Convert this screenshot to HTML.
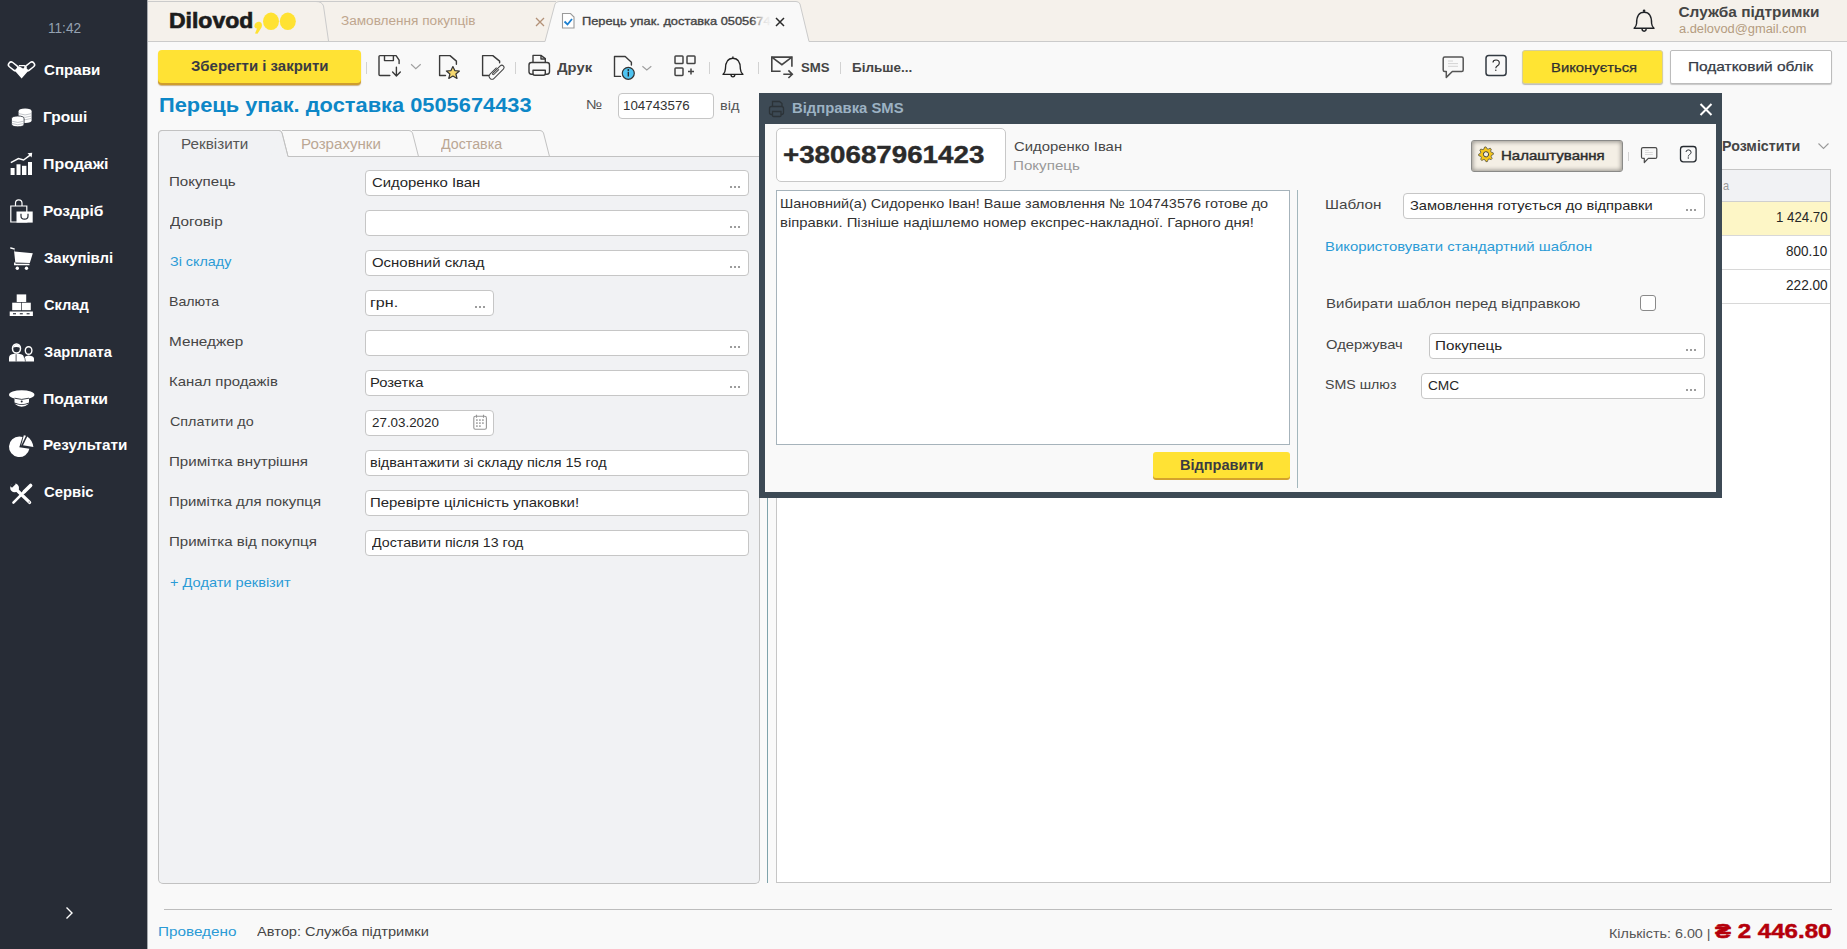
<!DOCTYPE html>
<html><head><meta charset="utf-8"><title>Dilovod</title>
<style>
html,body{margin:0;padding:0}
body{width:1847px;height:949px;overflow:hidden;position:relative;background:#f9f9f9;font-family:"Liberation Sans",sans-serif}
.a{position:absolute;box-sizing:border-box}
.t{position:absolute;white-space:pre;transform-origin:0 0;font-family:"Liberation Sans",sans-serif}
.inp{position:absolute;box-sizing:border-box;background:#fff;border:1px solid #c6c6c6;border-radius:4px}
.sep{position:absolute;width:1px;background:#d2d2d2}
svg{position:absolute;overflow:visible}
</style></head><body>
<!-- SIDEBAR -->
<div class="a" style="left:0;top:0;width:147px;height:949px;background:#272c36"></div>
<div class="a" style="left:147px;top:0;width:1px;height:949px;background:#a7aaae"></div>
<svg style="left:0;top:0" width="1" height="1">
<g fill="#fff" stroke="none">
<!-- handshake -->
<g transform="translate(13.2 66.3) rotate(38)"><rect x="-5.2" y="-2.7" width="10.4" height="5.4" rx="2.5" fill="none" stroke="#fff" stroke-width="1.5"/></g>
<g transform="translate(29.8 66.3) rotate(-38)"><rect x="-5.2" y="-2.7" width="10.4" height="5.4" rx="2.5" fill="none" stroke="#fff" stroke-width="1.5"/></g>
<path d="M14.6 70.6 L21.6 78.6 L28.6 70.6 L25.8 67.2 L23 68.6 L19.6 66.4 H18.2 Z"/>
<path d="M18.8 65.6 H24.4 L26.6 67.8" fill="none" stroke="#fff" stroke-width="1.3"/>
<!-- coins -->
<path d="M18.6 111.3 Q18.6 108.5 25.1 108.5 Q31.6 108.5 31.6 111.3 V120.3 Q31.6 123 25.1 123 Q18.6 123 18.6 120.3 Z"/>
<path d="M18.7 113.6 Q25.1 116.3 31.5 113.6 M18.7 116 Q25.1 118.7 31.5 116 M18.7 118.4 Q25.1 121.1 31.5 118.4" fill="none" stroke="#9aa0a8" stroke-width="0.6"/>
<path d="M11.5 118.8 Q11.5 116 17.8 116 Q24.1 116 24.1 118.8 V124 Q24.1 126.8 17.8 126.8 Q11.5 126.8 11.5 124 Z" stroke="#272c36" stroke-width="0.8"/>
<path d="M11.6 121.1 Q17.8 123.8 24 121.1 M11.6 123.4 Q17.8 126.1 24 123.4" fill="none" stroke="#9aa0a8" stroke-width="0.6"/>
<!-- chart -->
<rect x="10.6" y="168" width="4" height="7"/>
<rect x="16.5" y="164.3" width="4" height="10.7"/>
<rect x="22" y="165.8" width="4.4" height="9.2"/>
<rect x="28" y="162" width="4" height="13"/>
<path d="M10.8 162.6 L18.4 158.5 L23.6 160 L30.5 154.8" fill="none" stroke="#fff" stroke-width="1.5"/>
<path d="M27.5 153.2 L32.2 152.8 L31.6 157.5 Z"/>
<!-- bag -->
<path d="M10.8 206 H26.8 V222 H10.8 Z" fill="none" stroke="#fff" stroke-width="1.2"/>
<path d="M15.5 206 V203 Q15.5 199.8 18.7 199.8 Q22 199.8 22 203 V206" fill="none" stroke="#fff" stroke-width="1.2"/>
<rect x="16.5" y="211.5" width="16.2" height="11.1"/>
<path d="M21 213.8 V216 Q21 219.2 24.5 219.2 Q28 219.2 28 216 V213.8" fill="none" stroke="#272c36" stroke-width="1.2"/>
<!-- cart -->
<path d="M10.8 248 L14.1 248.9" fill="none" stroke="#fff" stroke-width="1.5" stroke-linecap="round"/>
<path d="M13.8 248.6 L14.5 251.4 L32.8 253.3 L29.8 262.9 L15.3 262.5 Z"/>
<path d="M14.8 262.5 V264.6 H29.5" fill="none" stroke="#fff" stroke-width="1.5"/>
<circle cx="17.3" cy="268.2" r="1.7"/><circle cx="26.5" cy="268.2" r="1.7"/>
<!-- sklad -->
<rect x="16.7" y="294.4" width="9.5" height="7.6"/>
<rect x="12.2" y="302.7" width="8.8" height="7.5"/>
<rect x="21.7" y="302.7" width="9.1" height="7.5"/>
<rect x="9.7" y="311.5" width="23.2" height="4.5"/>
<rect x="13" y="313.2" width="3" height="1.1" fill="#272c36"/>
<rect x="19.8" y="313.2" width="3" height="1.1" fill="#272c36"/>
<rect x="26.6" y="313.2" width="3" height="1.1" fill="#272c36"/>
<!-- people -->
<path d="M9 361.5 V358 Q9 354.5 13 354 L16.5 353.5 L20 354 Q24 354.5 24 358 V361.5 Z"/>
<path d="M16.1 354.2 V361.5" stroke="#272c36" stroke-width="0.8"/>
<ellipse cx="16.5" cy="348.5" rx="4" ry="4.6" fill="none" stroke="#fff" stroke-width="1.5"/>
<path d="M12.8 347.5 Q14 344.5 16.5 344.5 Q19.5 344.5 20.2 347.8 Q17 346.5 12.8 347.5 Z"/>
<path d="M23.8 361.5 V358.8 Q23.8 356.4 26.5 356 L28.6 355.6 L30.8 356 Q34 356.4 34 358.8 V361.5 Z"/>
<path d="M24.2 356.8 Q25 358 25.5 361.5" stroke="#272c36" stroke-width="0.7" fill="none"/>
<ellipse cx="28.6" cy="350.5" rx="3.3" ry="3.8" fill="none" stroke="#fff" stroke-width="1.4"/>
<!-- cap -->
<ellipse cx="21.7" cy="394.8" rx="12.7" ry="4.6"/>
<path d="M14.5 398 H29 V402.5 Q21.7 406 14.5 402.5 Z"/>
<path d="M14.3 403.5 Q21.7 410 29.2 403.5 Q21.7 406.3 14.3 403.5 Z"/>
<path d="M14.5 398.2 Q21.7 400.6 29 398.2" fill="none" stroke="#272c36" stroke-width="0.9"/>
<circle cx="21.7" cy="401.5" r="1" fill="#272c36"/>
<!-- pie -->
<path d="M19.3 447.3 L22.5 437 Q20.9 436.5 19.3 436.5 A 10.3 10.3 0 1 0 29.4 448.8 Z"/>
<path d="M23.8 435.2 L26 435.7 L21 446 Z"/>
<path d="M27.3 436.5 Q32.4 440 33.4 447 L23 445.2 Z"/>
<!-- tools -->
<path d="M13.4 502.6 L24.5 491.5" stroke="#fff" stroke-width="2.5" fill="none" stroke-linecap="round"/>
<path d="M24.2 491.8 L30.6 485.4" stroke="#fff" stroke-width="3.6" fill="none" stroke-linecap="round"/>
<path d="M16.5 489.8 L29.6 502.4" stroke="#fff" stroke-width="3.3" fill="none" stroke-linecap="round"/>
<circle cx="14.6" cy="487.9" r="4.4"/>
<g transform="translate(12.3 485.6) rotate(45)"><rect x="-1.4" y="-3.6" width="2.8" height="5.4" fill="#272c36"/></g>
<circle cx="29.2" cy="502" r="0.6" fill="#272c36"/>
</g>
</svg>


<!-- HEADER -->
<svg style="left:148px;top:0" width="1699" height="42">
<rect x="0" y="0" width="1699" height="42" fill="#f5f1eb"/>
<path d="M397 42 L407 4 Q408 1.5 411 1.5 H648 Q651 1.5 652 4 L661 42 Z" fill="#f9f9f9"/>
<path d="M0 1.5 H168 Q174 1.5 175.5 6 L180.6 41.5" stroke="#cbcbcb" stroke-width="1" fill="none"/>
<path d="M168 1.5 H408" stroke="#cbcbcb" stroke-width="1" fill="none"/>
<path d="M397 41.5 L407 4 Q408 1.5 411 1.5 H648 Q651 1.5 652 4 L661 41.5" stroke="#cbcbcb" stroke-width="1" fill="none"/>
<path d="M0 41.5 H397 M661 41.5 H1699" stroke="#cbcbcb" stroke-width="1" fill="none"/>
</svg>
<!-- logo dots -->
<svg style="left:0;top:0" width="1" height="1">
<path d="M256.5 22.5 Q254 24 254.5 27 Q255.5 28.5 257 28.5 L255 33.5 L257.5 33.7 L261.5 27.5 Q263 23 259.5 21.8 Q257.5 21.5 256.5 22.5 Z" fill="#ffe232"/>
<ellipse cx="271" cy="21.3" rx="8" ry="8.7" fill="#ffe232"/>
<ellipse cx="287.8" cy="21.3" rx="8" ry="8.7" fill="#ffe232"/>
</svg>
<!-- tab2 close -->
<svg style="left:0;top:0" width="1" height="1">
<path d="M536 18 L544 26 M544 18 L536 26" stroke="#b39177" stroke-width="1.3"/>
<path d="M776 18 L784 26 M784 18 L776 26" stroke="#2a2a2a" stroke-width="1.5"/>
<path d="M562.5 13.5 H570.5 L574 17 V28 H562.5 Z" fill="#fff" stroke="#9a9a9a" stroke-width="1.1"/>
<path d="M564.5 21.5 L567.5 24.5 L572 19" stroke="#1b7fd0" stroke-width="1.8" fill="none"/>
</svg>
<!--TAB3FADE-->
<!-- header bell -->
<svg style="left:0;top:0" width="1" height="1">
<path d="M1636.6 23.5 Q1636.4 12.3 1644.1 12.3 Q1651.8 12.3 1651.6 23.5 Q1651.9 26.5 1654 28.3 H1634.1 Q1636.3 26.5 1636.6 23.5 Z M1642 28.6 Q1642 31.2 1644.1 31.2 Q1646.2 31.2 1646.2 28.6" stroke="#1f2226" stroke-width="1.4" fill="none" stroke-linejoin="round"/><circle cx="1644.1" cy="10.8" r="1.3" fill="#1f2226"/>
</svg>

<!-- TOOLBAR -->
<div class="a" style="left:158px;top:50px;width:203px;height:33px;background:#ffe234;border-radius:4px;box-shadow:0 2px 0 #cf9d2d,0 2.5px 1px rgba(160,110,30,0.5)"></div>
<div class="sep" style="left:366px;top:62px;height:12px"></div>
<div class="sep" style="left:515px;top:62px;height:12px"></div>
<div class="sep" style="left:709px;top:62px;height:12px"></div>
<div class="sep" style="left:758px;top:62px;height:12px"></div>
<div class="sep" style="left:840px;top:62px;height:12px"></div>
<svg style="left:0;top:0" width="1" height="1">
<g fill="none" stroke="#3a3a3a" stroke-width="1.4" stroke-linejoin="round" stroke-linecap="round">
<!-- save -->
<path d="M389.8 75.5 H380 Q379 75.5 379 74.5 V56.6 Q379 55.6 380 55.6 H396.1 L399.1 60.1 V63.5"/>
<path d="M384.5 55.8 V60.6 H393.4 V55.8"/>
<path d="M396.4 67.2 V75.8 M392.6 72.1 L396.4 75.9 L400.3 72.1"/>
<!-- doc star -->
<path d="M445.5 75.5 H439.6 V55.6 H450 L456.4 61.1 V64.2"/>
<!-- doc clip -->
<path d="M488.5 75.5 H482.6 V55.6 H492.8 L499.6 61.1 V62.8"/>
<!-- printer -->
<path d="M533 62.3 V55.4 H540.9 L545.3 58.6 V62.3"/>
<path d="M541 55.6 V59 H545"/>
<path d="M533 74.2 H531.4 Q529 74.2 529 71.8 V65 Q529 62.5 531.4 62.5 H547 Q549.5 62.5 549.5 65 V71.8 Q549.5 74.2 547 74.2 H545.3"/>
<path d="M533 70.2 H545.3 V73.5 Q545.3 75.3 543.5 75.3 H534.8 Q533 75.3 533 73.5 Z"/>
<!-- doc info -->
<path d="M620.5 76.4 H614.5 V56.5 H625.2 L631.4 62.2 V65"/>
</g>
<path d="M452.9 66.5 L454.8 70.6 L459.4 71 L455.9 74 L457 78.4 L452.9 76 L448.8 78.4 L449.9 74 L446.4 71 L451 70.6 Z" fill="#f6d86f" stroke="#333" stroke-width="1.2" stroke-linejoin="round"/>
<g transform="translate(496.5 71.8) rotate(-45)">
<path d="M3 -2.9 H-6.3 A2.9 2.9 0 0 0 -6.3 2.9 H6.8 A2.2 2.2 0 0 0 6.8 -1.5 H-3.8 A0.75 0.75 0 0 0 -3.8 0 H3.5" fill="none" stroke="#444" stroke-width="1"/>
</g>
<path d="M411.1 64.3 L415.8 68.6 L420.7 64.3 M642.4 66.2 L646.8 69.9 L651.3 66.2" fill="none" stroke="#a0a0a0" stroke-width="1.2"/>
<circle cx="628.3" cy="73.3" r="6" fill="#4fc4f1" stroke="#333" stroke-width="1.2"/>
<circle cx="628.3" cy="70" r="0.9" fill="#222"/>
<path d="M628.3 71.8 V76.6" stroke="#222" stroke-width="1.3"/>
<g fill="none" stroke="#444" stroke-width="1.5">
<rect x="675" y="56" width="8" height="7.5" rx="0.8"/>
<rect x="687" y="56" width="8" height="7.5" rx="0.8"/>
<rect x="675" y="68" width="8" height="7.4" rx="0.8"/>
<path d="M691 68.5 V74.5 M688 71.5 H694"/>
</g>
<path d="M732.9 56.6 V58 M725.4 69 Q725.4 58.2 732.9 58.2 Q740.4 58.2 740.4 69 Q740.6 72.6 742.9 74.4 H723.1 Q725.2 72.6 725.4 69 Z M731 74.6 Q731 76.9 732.9 76.9 Q734.8 76.9 734.8 74.6" fill="none" stroke="#222" stroke-width="1.4" stroke-linejoin="round"/>
<g fill="none" stroke="#444" stroke-width="1.6">
<path d="M780.6 71.3 H771.8 V57.1 H791.9 V66.7"/>
<path d="M771.8 57.1 L781.9 64.7 L791.9 57.1"/>
<path d="M783.3 74.2 H792.2 M788.4 70.4 L792.3 74.2 L788.4 78"/>
</g>
<path d="M1444.7 57 H1461.7 Q1463.2 57 1463.2 58.5 V70 Q1463.2 71.5 1461.7 71.5 H1452.3 L1446.3 77.4 V71.5 H1444.7 Q1443.2 71.5 1443.2 70 V58.5 Q1443.2 57 1444.7 57 Z" fill="none" stroke="#555" stroke-width="1.5" stroke-linejoin="round"/>
<path d="M1448 61 H1453 M1448 63.6 H1458 M1448 66.3 H1458" stroke="#cfcfcf" stroke-width="0.9"/>
<rect x="1486" y="55.5" width="20.1" height="20" rx="2.8" fill="none" stroke="#333a42" stroke-width="1.5"/>
<path d="M1493 62.5 Q1493 60 1496 60 Q1499.3 60 1499.3 63 Q1499.3 65 1497.2 66 Q1495.8 66.8 1495.8 68.3" fill="none" stroke="#222" stroke-width="1.1"/>
<circle cx="1495.8" cy="70.3" r="0.7" fill="#222"/>
</svg>

<div class="a" style="left:1522px;top:50px;width:141px;height:34px;background:#ffe433;border:1px solid #d6cf9c;border-radius:3px;box-shadow:0 1px 1px rgba(0,0,0,0.25)"></div>
<div class="a" style="left:1670px;top:50px;width:162px;height:34px;background:#fff;border:1px solid #bcbcbc;border-radius:2px;box-shadow:0 1px 1px rgba(0,0,0,0.2)"></div>

<!-- TITLE ROW -->
<div class="inp" style="left:618px;top:93px;width:96px;height:26px"></div>

<!-- FORM PANEL -->
<div class="a" style="left:158px;top:156px;width:602px;height:728px;background:#f1f2f4;border:1px solid #c2c2c2;border-top:none;border-radius:0 0 5px 5px"></div>
<svg style="left:0;top:0" width="1" height="1">
<path d="M158.5 157 V134 Q158.5 130.5 162 130.5 H279 Q281 130.5 282 133 L288 156.5 H760" fill="none" stroke="#c2c2c2" stroke-width="1"/>
<path d="M282 130.5 H409 Q411.5 130.5 412.5 133 L418.5 156.5 M412 130.5 H540 Q542.5 130.5 543.5 133 L549.5 156.5" fill="none" stroke="#c2c2c2" stroke-width="1"/>
</svg>
<div class="a" style="left:159px;top:131px;width:122px;height:26px;background:#f1f2f4"></div>
<svg style="left:0;top:0" width="1" height="1">
<path d="M281 131 L287.5 157 H270 Z" fill="#f1f2f4"/>
<path d="M158.5 157 V134 Q158.5 130.5 162 130.5 H279 Q281 130.5 282 133 L288 156.5" fill="none" stroke="#c2c2c2" stroke-width="1"/>
</svg>
<div class="inp" style="left:365px;top:170px;width:384px;height:26px"></div>
<div class="a" style="left:730px;top:186px;width:2px;height:2px;background:#9c9c9c"></div>
<div class="a" style="left:734px;top:186px;width:2px;height:2px;background:#9c9c9c"></div>
<div class="a" style="left:738px;top:186px;width:2px;height:2px;background:#9c9c9c"></div>
<div class="inp" style="left:365px;top:210px;width:384px;height:26px"></div>
<div class="a" style="left:730px;top:226px;width:2px;height:2px;background:#9c9c9c"></div>
<div class="a" style="left:734px;top:226px;width:2px;height:2px;background:#9c9c9c"></div>
<div class="a" style="left:738px;top:226px;width:2px;height:2px;background:#9c9c9c"></div>
<div class="inp" style="left:365px;top:250px;width:384px;height:26px"></div>
<div class="a" style="left:730px;top:266px;width:2px;height:2px;background:#9c9c9c"></div>
<div class="a" style="left:734px;top:266px;width:2px;height:2px;background:#9c9c9c"></div>
<div class="a" style="left:738px;top:266px;width:2px;height:2px;background:#9c9c9c"></div>
<div class="inp" style="left:365px;top:290px;width:129px;height:26px"></div>
<div class="a" style="left:475px;top:306px;width:2px;height:2px;background:#9c9c9c"></div>
<div class="a" style="left:479px;top:306px;width:2px;height:2px;background:#9c9c9c"></div>
<div class="a" style="left:483px;top:306px;width:2px;height:2px;background:#9c9c9c"></div>
<div class="inp" style="left:365px;top:330px;width:384px;height:26px"></div>
<div class="a" style="left:730px;top:346px;width:2px;height:2px;background:#9c9c9c"></div>
<div class="a" style="left:734px;top:346px;width:2px;height:2px;background:#9c9c9c"></div>
<div class="a" style="left:738px;top:346px;width:2px;height:2px;background:#9c9c9c"></div>
<div class="inp" style="left:365px;top:370px;width:384px;height:26px"></div>
<div class="a" style="left:730px;top:386px;width:2px;height:2px;background:#9c9c9c"></div>
<div class="a" style="left:734px;top:386px;width:2px;height:2px;background:#9c9c9c"></div>
<div class="a" style="left:738px;top:386px;width:2px;height:2px;background:#9c9c9c"></div>
<div class="inp" style="left:365px;top:410px;width:129px;height:26px"></div>
<div class="inp" style="left:365px;top:450px;width:384px;height:26px"></div>
<div class="inp" style="left:365px;top:490px;width:384px;height:26px"></div>
<div class="inp" style="left:365px;top:530px;width:384px;height:26px"></div>
<svg style="left:0;top:0" width="1" height="1">
<rect x="473.8" y="416.3" width="12.6" height="13" rx="1.6" fill="none" stroke="#959595" stroke-width="1.1"/>
<path d="M476.5 414.8 V417.8 M483.5 414.8 V417.8" stroke="#959595" stroke-width="1.1"/>
<g fill="#b0b0b0"><rect x="476" y="419.2" width="1.8" height="1.8"/><rect x="479" y="419.2" width="1.8" height="1.8"/><rect x="482" y="419.2" width="1.8" height="1.8"/>
<rect x="476" y="422.2" width="1.8" height="1.8"/><rect x="479" y="422.2" width="1.8" height="1.8"/><rect x="482" y="422.2" width="1.8" height="1.8"/>
<rect x="476" y="425.2" width="1.8" height="1.8"/><rect x="479" y="425.2" width="1.8" height="1.8"/></g>
</svg>

<!-- RIGHT AREA -->
<div class="a" style="left:767px;top:130px;width:1px;height:753px;background:#7fa3ab"></div>
<div class="a" style="left:776px;top:169px;width:1055px;height:714px;background:#fff;border:1px solid #c6c6c6"></div>
<div class="a" style="left:777px;top:170px;width:1053px;height:32px;background:#f1f2f4;border-bottom:1px solid #cfcfcf"></div>
<div class="a" style="left:777px;top:202px;width:1053px;height:34px;background:#fdf6c6;border-bottom:1px solid #d8d8d8"></div>
<div class="a" style="left:777px;top:236px;width:1053px;height:34px;background:#fff;border-bottom:1px solid #d8d8d8"></div>
<div class="a" style="left:777px;top:270px;width:1053px;height:34px;background:#fff;border-bottom:1px solid #d8d8d8"></div>
<svg style="left:0;top:0" width="1" height="1">
<path d="M1818.5 143.5 L1823.5 148.5 L1828.5 143.5" stroke="#9a9a9a" stroke-width="1.1" fill="none"/>
</svg>

<!-- FOOTER -->
<div class="a" style="left:164px;top:909px;width:1668px;height:1px;background:#bdbdbd"></div>
<svg style="left:0;top:0" width="1" height="1">
<path d="M66.5 907.5 L72 913 L66.5 918.5" stroke="#ffffff" stroke-width="1.4" fill="none"/>
</svg>

<!-- MODAL -->
<div class="a" style="left:759px;top:93px;width:963px;height:405px;background:#3d4a55"></div>
<div class="a" style="left:765px;top:124px;width:951px;height:368px;background:#f9f9f9"></div>
<svg style="left:0;top:0" width="1" height="1">
<g stroke="#2c3338" stroke-width="1.3" fill="none">
<path d="M772.5 106.5 V101.5 H779.5 L782 103.5 V106.5"/>
<path d="M772.5 114.5 H771.5 Q769.5 114.5 769.5 112.5 V108.5 Q769.5 106.5 771.5 106.5 H781.5 Q783.5 106.5 783.5 108.5 V112.5 Q783.5 114.5 781.5 114.5 H781"/>
<path d="M772.5 111.5 H781 V115.5 Q781 116.5 780 116.5 H773.5 Q772.5 116.5 772.5 115.5 Z"/>
</g>
<path d="M1700.5 104 L1711.5 115 M1711.5 104 L1700.5 115" stroke="#ffffff" stroke-width="2"/>
</svg>
<div class="a" style="left:776px;top:128px;width:230px;height:54px;background:#fff;border:1px solid #c8c8c8;border-radius:5px"></div>
<div class="a" style="left:776px;top:190px;width:514px;height:255px;background:#fff;border:1px solid #a6b3bb"></div>
<div class="a" style="left:1297px;top:190px;width:1px;height:298px;background:#a3b7bd"></div>
<div class="a" style="left:1153px;top:452px;width:137px;height:26px;background:#ffe234;border-radius:3px;box-shadow:0 2px 0 #d4a22c"></div>
<div class="a" style="left:1471px;top:140px;width:152px;height:32px;background:#f4efe5;border:1px solid #8a8a88;border-radius:3px;box-shadow:inset 0 0 4px 1px rgba(0,0,0,0.38)"></div>
<svg style="left:0;top:0" width="1" height="1">
<g transform="translate(1486,154.3) rotate(-11)"><path d="M0.00 -7.40 L1.44 -7.26 L2.14 -5.17 L3.11 -4.66 L5.23 -5.23 L6.15 -4.11 L5.17 -2.14 L5.49 -1.09 L7.40 0.00 L7.26 1.44 L5.17 2.14 L4.66 3.11 L5.23 5.23 L4.11 6.15 L2.14 5.17 L1.09 5.49 L0.00 7.40 L-1.44 7.26 L-2.14 5.17 L-3.11 4.66 L-5.23 5.23 L-6.15 4.11 L-5.17 2.14 L-5.49 1.09 L-7.40 0.00 L-7.26 -1.44 L-5.17 -2.14 L-4.66 -3.11 L-5.23 -5.23 L-4.11 -6.15 L-2.14 -5.17 L-1.09 -5.49 Z" fill="#f5c61c" stroke="#4a4a40" stroke-width="0.7" stroke-linejoin="round"/><circle cx="0" cy="0" r="2.6" fill="#f4efe5" stroke="#3a3a35" stroke-width="0.9"/></g>
</svg>
<div class="sep" style="left:1628px;top:152px;height:9px"></div>
<svg style="left:0;top:0" width="1" height="1">
<path d="M1643 147.6 H1655.3 Q1656.8 147.6 1656.8 149.1 V156.9 Q1656.8 158.4 1655.3 158.4 H1648.3 L1644.3 162.5 V158.4 H1643 Q1641.5 158.4 1641.5 156.9 V149.1 Q1641.5 147.6 1643 147.6 Z" fill="none" stroke="#4a4a4a" stroke-width="1.2" stroke-linejoin="round"/>
<path d="M1645 150.4 H1648.8 M1645 152.5 H1652.8 M1645 154.5 H1652.8" stroke="#cccccc" stroke-width="0.7"/>
<rect x="1680.5" y="146.5" width="15.6" height="15.4" rx="2.8" fill="none" stroke="#262b30" stroke-width="1.3"/>
</svg>
<svg style="left:0;top:0" width="1" height="1"><path d="M1686 152 Q1686 149.9 1688.5 149.9 Q1691.1 149.9 1691.1 152.3 Q1691.1 153.8 1689.5 154.6 Q1688.3 155.3 1688.3 156.5" fill="none" stroke="#2a2f35" stroke-width="1"/><circle cx="1688.3" cy="158" r="0.7" fill="#2a2f35"/></svg>
<div class="inp" style="left:1403px;top:193px;width:302px;height:26px"></div>
<div class="a" style="left:1640px;top:295px;width:16px;height:16px;background:#fff;border:1px solid #8a8a8a;border-radius:3px"></div>
<div class="inp" style="left:1429px;top:333px;width:276px;height:26px"></div>
<div class="inp" style="left:1421px;top:373px;width:284px;height:26px"></div>
<div class="a" style="left:1686px;top:209px;width:2px;height:2px;background:#9c9c9c"></div>
<div class="a" style="left:1690px;top:209px;width:2px;height:2px;background:#9c9c9c"></div>
<div class="a" style="left:1694px;top:209px;width:2px;height:2px;background:#9c9c9c"></div>
<div class="a" style="left:1686px;top:349px;width:2px;height:2px;background:#9c9c9c"></div>
<div class="a" style="left:1690px;top:349px;width:2px;height:2px;background:#9c9c9c"></div>
<div class="a" style="left:1694px;top:349px;width:2px;height:2px;background:#9c9c9c"></div>
<div class="a" style="left:1686px;top:389px;width:2px;height:2px;background:#9c9c9c"></div>
<div class="a" style="left:1690px;top:389px;width:2px;height:2px;background:#9c9c9c"></div>
<div class="a" style="left:1694px;top:389px;width:2px;height:2px;background:#9c9c9c"></div>


<div class="t" style="left:48.11px;top:20px;font-size:15.3px;line-height:15.3px;font-weight:400;color:#95a2b2;transform:scaleX(0.8889);">11:42</div>
<div class="t" style="left:44.30px;top:63px;font-size:14.5px;line-height:14.5px;font-weight:700;color:#ffffff;transform:scaleX(1.0434);">Справи</div>
<div class="t" style="left:43.23px;top:110px;font-size:14.5px;line-height:14.5px;font-weight:700;color:#ffffff;transform:scaleX(1.0675);">Гроші</div>
<div class="t" style="left:43.20px;top:157px;font-size:14.5px;line-height:14.5px;font-weight:700;color:#ffffff;transform:scaleX(1.0983);">Продажі</div>
<div class="t" style="left:43.23px;top:204px;font-size:14.5px;line-height:14.5px;font-weight:700;color:#ffffff;transform:scaleX(1.0727);">Роздріб</div>
<div class="t" style="left:44.30px;top:251px;font-size:14.5px;line-height:14.5px;font-weight:700;color:#ffffff;transform:scaleX(1.0299);">Закупівлі</div>
<div class="t" style="left:44.30px;top:298px;font-size:14.5px;line-height:14.5px;font-weight:700;color:#ffffff;transform:scaleX(1.0067);">Склад</div>
<div class="t" style="left:44.30px;top:345px;font-size:14.5px;line-height:14.5px;font-weight:700;color:#ffffff;transform:scaleX(1.0103);">Зарплата</div>
<div class="t" style="left:43.21px;top:392px;font-size:14.5px;line-height:14.5px;font-weight:700;color:#ffffff;transform:scaleX(1.0914);">Податки</div>
<div class="t" style="left:43.25px;top:438px;font-size:14.5px;line-height:14.5px;font-weight:700;color:#ffffff;transform:scaleX(1.0532);">Результати</div>
<div class="t" style="left:44.30px;top:485px;font-size:14.5px;line-height:14.5px;font-weight:700;color:#ffffff;transform:scaleX(1.0229);">Сервіс</div>
<div class="t" style="left:168.67px;top:10px;font-size:22.4px;line-height:22.4px;font-weight:700;color:#1c1c1c;transform:scaleX(1.0263);-webkit-text-stroke:0.7px #1c1c1c;">Dilovod</div>
<div class="t" style="left:340.80px;top:15px;font-size:12.3px;line-height:12.3px;font-weight:400;color:#bfa68e;transform:scaleX(1.1058);">Замовлення покупців</div>
<div class="t" style="left:1678.50px;top:4px;font-size:15.4px;line-height:15.4px;font-weight:700;color:#454545;">Служба підтримки</div>
<div class="t" style="left:1678.50px;top:23px;font-size:12.5px;line-height:12.5px;font-weight:400;color:#b49c80;transform:scaleX(1.0282);">a.delovod@gmail.com</div>
<div class="t" style="left:191.40px;top:60px;font-size:13.8px;line-height:13.8px;font-weight:700;color:#3a3b42;transform:scaleX(1.0841);">Зберегти і закрити</div>
<div class="t" style="left:556.70px;top:61px;font-size:13.5px;line-height:13.5px;font-weight:700;color:#454545;transform:scaleX(1.0969);">Друк</div>
<div class="t" style="left:800.70px;top:61px;font-size:13.5px;line-height:13.5px;font-weight:700;color:#454545;transform:scaleX(0.9759);">SMS</div>
<div class="t" style="left:852.00px;top:61px;font-size:13.5px;line-height:13.5px;font-weight:700;color:#454545;">Більше...</div>
<div class="t" style="left:1550.90px;top:61px;font-size:13.5px;line-height:13.5px;font-weight:400;color:#303030;transform:scaleX(1.0974);-webkit-text-stroke:0.25px #303030;">Виконується</div>
<div class="t" style="left:1687.86px;top:60px;font-size:13.5px;line-height:13.5px;font-weight:400;color:#353a45;transform:scaleX(1.1440);-webkit-text-stroke:0.25px #353a45;">Податковий облік</div>
<div class="t" style="left:158.95px;top:95px;font-size:20.9px;line-height:20.9px;font-weight:700;color:#0d87c7;transform:scaleX(1.0451);">Перець упак. доставка 0505674433</div>
<div class="t" style="left:585.63px;top:98px;font-size:13px;line-height:13px;font-weight:400;color:#555555;transform:scaleX(1.1692);">№</div>
<div class="t" style="left:622.98px;top:99px;font-size:13px;line-height:13px;font-weight:400;color:#333333;transform:scaleX(1.0250);">104743576</div>
<div class="t" style="left:719.88px;top:99px;font-size:13px;line-height:13px;font-weight:400;color:#555555;transform:scaleX(1.1176);">від</div>
<div class="t" style="left:180.81px;top:137px;font-size:14px;line-height:14px;font-weight:400;color:#555555;transform:scaleX(1.0900);">Реквізити</div>
<div class="t" style="left:300.62px;top:137px;font-size:14px;line-height:14px;font-weight:400;color:#bba794;transform:scaleX(1.0795);">Розрахунки</div>
<div class="t" style="left:441.30px;top:137px;font-size:14px;line-height:14px;font-weight:400;color:#bba794;transform:scaleX(1.0167);">Доставка</div>
<div class="t" style="left:168.83px;top:176px;font-size:12.9px;line-height:12.9px;font-weight:400;color:#454545;transform:scaleX(1.1714);">Покупець</div>
<div class="t" style="left:170.00px;top:216px;font-size:12.9px;line-height:12.9px;font-weight:400;color:#454545;transform:scaleX(1.1841);">Договір</div>
<div class="t" style="left:170.00px;top:256px;font-size:12.9px;line-height:12.9px;font-weight:400;color:#2b9bd6;transform:scaleX(1.1127);">Зі складу</div>
<div class="t" style="left:168.90px;top:296px;font-size:12.9px;line-height:12.9px;font-weight:400;color:#454545;transform:scaleX(1.1000);">Валюта</div>
<div class="t" style="left:168.81px;top:336px;font-size:12.9px;line-height:12.9px;font-weight:400;color:#454545;transform:scaleX(1.1852);">Менеджер</div>
<div class="t" style="left:168.84px;top:376px;font-size:12.9px;line-height:12.9px;font-weight:400;color:#454545;transform:scaleX(1.1559);">Канал продажів</div>
<div class="t" style="left:170.00px;top:416px;font-size:12.9px;line-height:12.9px;font-weight:400;color:#454545;transform:scaleX(1.1120);">Сплатити до</div>
<div class="t" style="left:168.83px;top:456px;font-size:12.9px;line-height:12.9px;font-weight:400;color:#454545;transform:scaleX(1.1709);">Примітка внутрішня</div>
<div class="t" style="left:168.84px;top:496px;font-size:12.9px;line-height:12.9px;font-weight:400;color:#454545;transform:scaleX(1.1577);">Примітка для покупця</div>
<div class="t" style="left:168.83px;top:536px;font-size:12.9px;line-height:12.9px;font-weight:400;color:#454545;transform:scaleX(1.1688);">Примітка від покупця</div>
<div class="t" style="left:170.00px;top:577px;font-size:12.9px;line-height:12.9px;font-weight:400;color:#2b9bd6;transform:scaleX(1.1308);">+ Додати реквізит</div>
<div class="t" style="left:371.50px;top:177px;font-size:12.9px;line-height:12.9px;font-weight:400;color:#262626;transform:scaleX(1.1548);">Сидоренко Іван</div>
<div class="t" style="left:371.50px;top:257px;font-size:12.9px;line-height:12.9px;font-weight:400;color:#262626;transform:scaleX(1.1588);">Основний склад</div>
<div class="t" style="left:370.25px;top:297px;font-size:12.9px;line-height:12.9px;font-weight:400;color:#262626;transform:scaleX(1.2476);">грн.</div>
<div class="t" style="left:370.35px;top:377px;font-size:12.9px;line-height:12.9px;font-weight:400;color:#262626;transform:scaleX(1.1457);">Розетка</div>
<div class="t" style="left:371.50px;top:417px;font-size:12.9px;line-height:12.9px;font-weight:400;color:#262626;transform:scaleX(1.0375);">27.03.2020</div>
<div class="t" style="left:370.38px;top:457px;font-size:12.9px;line-height:12.9px;font-weight:400;color:#262626;transform:scaleX(1.1180);">відвантажити зі складу після 15 год</div>
<div class="t" style="left:370.34px;top:497px;font-size:12.9px;line-height:12.9px;font-weight:400;color:#262626;transform:scaleX(1.1587);">Перевірте цілісність упаковки!</div>
<div class="t" style="left:371.50px;top:537px;font-size:12.9px;line-height:12.9px;font-weight:400;color:#262626;transform:scaleX(1.1022);">Доставити після 13 год</div>
<div class="t" style="left:792.02px;top:102px;font-size:13.8px;line-height:13.8px;font-weight:700;color:#9cb2c3;transform:scaleX(1.0757);">Відправка SMS</div>
<div class="t" style="left:783.30px;top:143px;font-size:24.7px;line-height:24.7px;font-weight:700;color:#2b2b2b;transform:scaleX(1.1235);-webkit-text-stroke:0.4px #2b2b2b;">+380687961423</div>
<div class="t" style="left:1013.70px;top:141px;font-size:12.9px;line-height:12.9px;font-weight:400;color:#474747;transform:scaleX(1.1527);">Сидоренко Іван</div>
<div class="t" style="left:1012.53px;top:160px;font-size:12.9px;line-height:12.9px;font-weight:400;color:#9a9a9a;transform:scaleX(1.1750);">Покупець</div>
<div class="t" style="left:780.13px;top:197px;font-size:13.5px;line-height:13.5px;font-weight:400;color:#333333;transform:scaleX(1.0695);">Шановний(а) Сидоренко Іван! Ваше замовлення № 104743576 готове до</div>
<div class="t" style="left:780.10px;top:216px;font-size:13.5px;line-height:13.5px;font-weight:400;color:#333333;transform:scaleX(1.0998);">віправки. Пізніше надішлемо номер експрес-накладної. Гарного дня!</div>
<div class="t" style="left:1179.94px;top:459px;font-size:13.8px;line-height:13.8px;font-weight:700;color:#3a3b42;transform:scaleX(1.0551);">Відправити</div>
<div class="t" style="left:1500.89px;top:149px;font-size:13.5px;line-height:13.5px;font-weight:400;color:#2e2e2e;transform:scaleX(1.1109);-webkit-text-stroke:0.45px #2e2e2e;">Налаштування</div>
<div class="t" style="left:1325.04px;top:198px;font-size:13.2px;line-height:13.2px;font-weight:400;color:#454545;transform:scaleX(1.1553);">Шаблон</div>
<div class="t" style="left:1409.70px;top:199px;font-size:13.2px;line-height:13.2px;font-weight:400;color:#262626;transform:scaleX(1.1110);">Замовлення готується до відправки</div>
<div class="t" style="left:1324.87px;top:240px;font-size:13.2px;line-height:13.2px;font-weight:400;color:#2b9bd6;transform:scaleX(1.1302);">Використовувати стандартний шаблон</div>
<div class="t" style="left:1325.66px;top:297px;font-size:13.2px;line-height:13.2px;font-weight:400;color:#454545;transform:scaleX(1.1383);">Вибирати шаблон перед відправкою</div>
<div class="t" style="left:1325.60px;top:338px;font-size:13.2px;line-height:13.2px;font-weight:400;color:#454545;transform:scaleX(1.1176);">Одержувач</div>
<div class="t" style="left:1435.15px;top:339px;font-size:13.2px;line-height:13.2px;font-weight:400;color:#262626;transform:scaleX(1.1526);">Покупець</div>
<div class="t" style="left:1324.52px;top:378px;font-size:13.2px;line-height:13.2px;font-weight:400;color:#454545;transform:scaleX(1.0754);">SMS шлюз</div>
<div class="t" style="left:1427.80px;top:379px;font-size:13.2px;line-height:13.2px;font-weight:400;color:#262626;transform:scaleX(1.0414);">СМС</div>
<div class="t" style="left:1721.67px;top:140px;font-size:13.8px;line-height:13.8px;font-weight:700;color:#454545;transform:scaleX(1.0311);">Розмістити</div>
<div class="t" style="left:1775.54px;top:211px;font-size:13.8px;line-height:13.8px;font-weight:400;color:#262626;transform:scaleX(0.9604);">1 424.70</div>
<div class="t" style="left:1786.00px;top:245px;font-size:13.8px;line-height:13.8px;font-weight:400;color:#262626;transform:scaleX(0.9762);">800.10</div>
<div class="t" style="left:1785.50px;top:279px;font-size:13.8px;line-height:13.8px;font-weight:400;color:#262626;transform:scaleX(0.9881);">222.00</div>
<div class="t" style="left:157.84px;top:925px;font-size:13.2px;line-height:13.2px;font-weight:400;color:#2b9bd6;transform:scaleX(1.1591);">Проведено</div>
<div class="t" style="left:256.50px;top:925px;font-size:13.2px;line-height:13.2px;font-weight:400;color:#454545;transform:scaleX(1.1065);">Автор: Служба підтримки</div>
<div class="t" style="left:1609.15px;top:928px;font-size:12.5px;line-height:12.5px;font-weight:400;color:#555555;transform:scaleX(1.1460);">Кількість: 6.00 |</div>
<div class="t" style="left:1715.00px;top:921px;font-size:20.5px;line-height:20.5px;font-weight:700;color:#b5000b;transform:scaleX(1.1737);-webkit-text-stroke:0.5px #b5000b;">₴ 2 446.80</div>
<div class="t" style="left:581.50px;top:16px;font-size:11.3px;line-height:11.3px;font-weight:400;color:#454545;transform:scaleX(1.1347);-webkit-text-stroke:0.35px #454545;">Перець упак. доставка 0505674</div>
<div class="t" style="left:1723.00px;top:179px;font-size:13.5px;line-height:13.5px;font-weight:400;color:#9a9a9a;transform:scaleX(0.8125);">a</div>
<div class="a" style="left:752px;top:12px;width:21px;height:18px;background:linear-gradient(to right, rgba(249,249,249,0) 0%, rgba(249,249,249,0.85) 55%, #f9f9f9 100%)"></div>
</body></html>
